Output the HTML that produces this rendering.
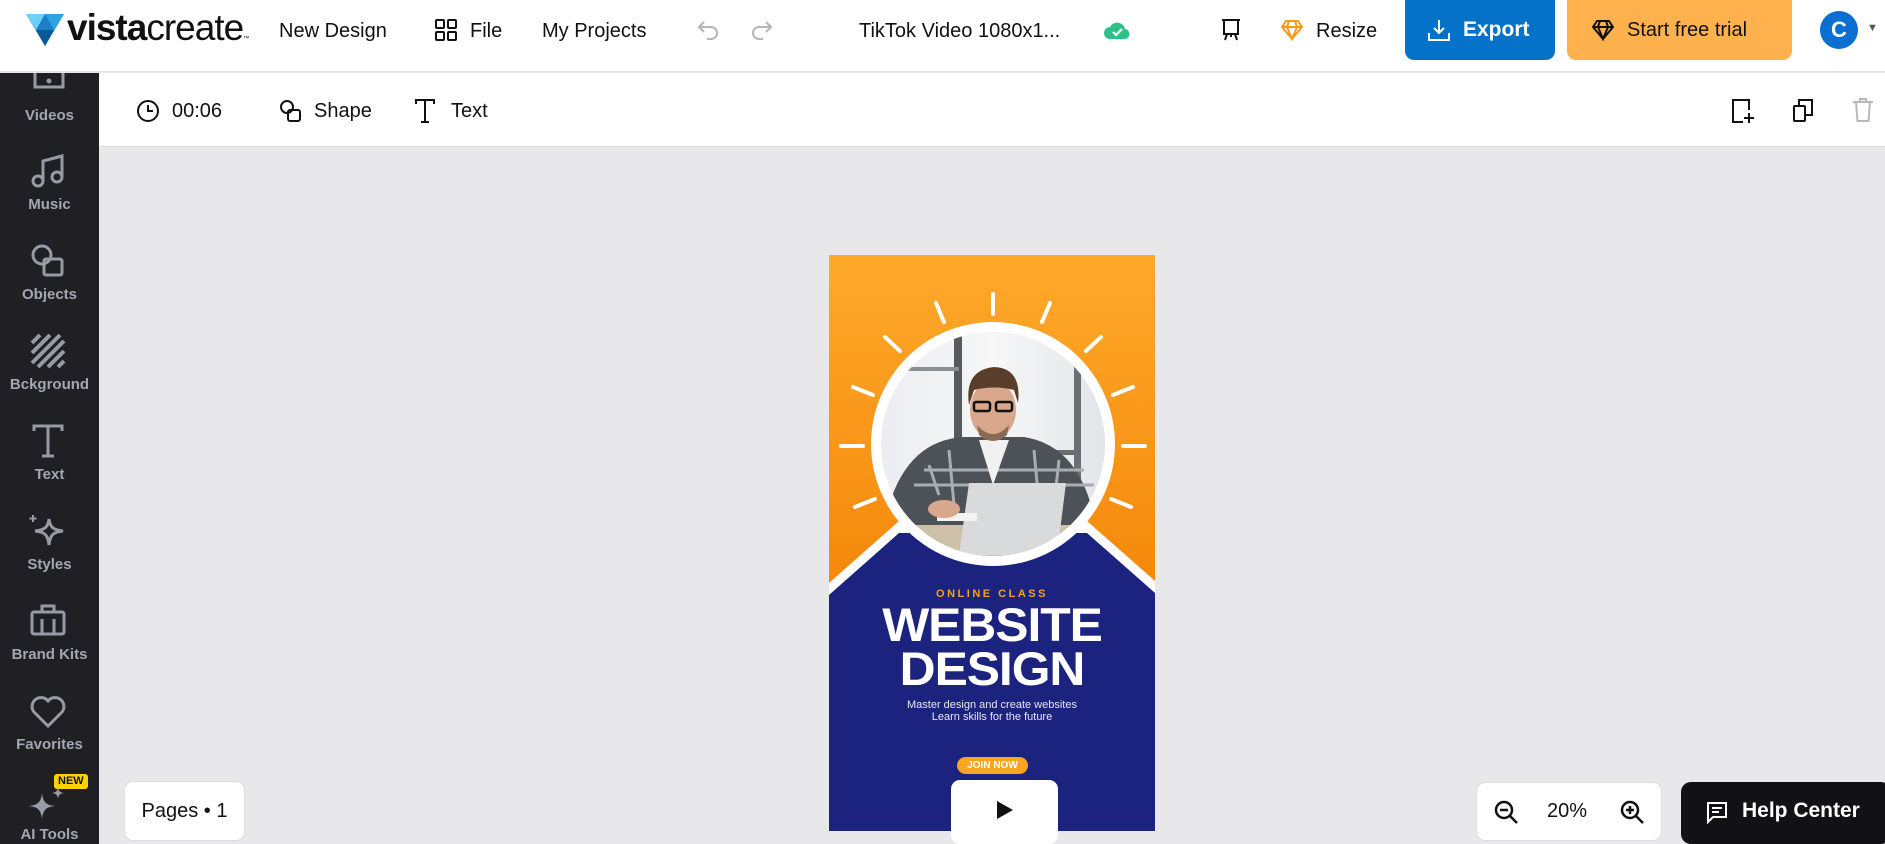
<!DOCTYPE html>
<html><head><meta charset="utf-8">
<style>
*{margin:0;padding:0;box-sizing:border-box}
body{width:1885px;height:844px;overflow:hidden;background:#e8e8ea;font-family:"Liberation Sans",Arial,sans-serif;position:relative;color:#111}
.hdr{position:absolute;left:0;top:0;width:1885px;height:72px;background:#fff;border-bottom:1px solid #e2e2e4}
.t{position:absolute;white-space:nowrap}
.side{position:absolute;left:0;top:73px;width:99px;height:771px;background:#1f1f24}
.side .lab{position:absolute;width:99px;text-align:center;color:#a6a6b0;font-size:15px;font-weight:bold}
.tb{position:absolute;left:99px;top:73px;width:1786px;height:74px;background:#fff;border-bottom:1px solid #dedee0}
.btn{position:absolute;border-radius:8px}
</style></head><body>
<div class="hdr">
  <svg style="position:absolute;left:26px;top:14px" width="38" height="32" viewBox="0 0 38 32">
    <polygon points="0,0 38,0 19,32" fill="#1b7fc8"/>
    <polygon points="0,0 19,0 10,16" fill="#6fd0f5"/>
    <polygon points="19,0 38,0 28,16" fill="#2da3e0"/>
    <polygon points="10,16 28,16 19,32" fill="#0a5a9a"/>
  </svg>
  <div class="t" style="left:67px;top:7px;font-size:37px;letter-spacing:-1px"><b>vista</b>create<span style="font-size:6px">™</span></div>
  <div class="t" style="left:279px;top:20px;font-size:20px">New Design</div>
  <svg style="position:absolute;left:435px;top:19px" width="22" height="22" viewBox="0 0 22 22" fill="none" stroke="#111" stroke-width="2"><rect x="1" y="1" width="8" height="8" rx="1"/><rect x="13" y="1" width="8" height="8" rx="1"/><rect x="1" y="13" width="8" height="8" rx="1"/><rect x="13" y="13" width="8" height="8" rx="1"/></svg>
  <div class="t" style="left:470px;top:20px;font-size:20px">File</div>
  <div class="t" style="left:542px;top:20px;font-size:20px">My Projects</div>
  <svg style="position:absolute;left:697px;top:20px" width="24" height="20" viewBox="0 0 24 20" fill="none" stroke="#b5b5ba" stroke-width="2"><path d="M7 2 2 7l5 5M2 7h12a6 6 0 0 1 0 12h-4"/></svg>
  <svg style="position:absolute;left:749px;top:20px" width="24" height="20" viewBox="0 0 24 20" fill="none" stroke="#b5b5ba" stroke-width="2"><path d="M17 2l5 5-5 5M22 7H10a6 6 0 0 0 0 12h4"/></svg>
  <div class="t" style="left:859px;top:20px;font-size:20px">TikTok Video 1080x1...</div>
  <svg style="position:absolute;left:1104px;top:19px" width="26" height="22" viewBox="0 0 26 22"><path d="M6 20a6 6 0 0 1 0-12 8 8 0 0 1 15 2 5 5 0 0 1-1 10z" fill="#2fc08a"/><path d="M9 13l3 3 6-6" fill="none" stroke="#fff" stroke-width="2.2"/></svg>
  <svg style="position:absolute;left:1219px;top:18px" width="24" height="24" viewBox="0 0 24 24" fill="none" stroke="#111" stroke-width="2"><path d="M3 2h18M5 2v14h14V2M8 16l-2 6M16 16l2 6M12 16v3"/></svg>
  <svg style="position:absolute;left:1281px;top:19px" width="22" height="22" viewBox="0 0 22 22" fill="none" stroke="#f59c1a" stroke-width="2"><path d="M5 2h12l4 6-10 12L1 8zM1 8h20M8 2 6 8l5 12 5-12-2-6"/></svg>
  <div class="t" style="left:1316px;top:20px;font-size:20px">Resize</div>
  <div class="btn" style="left:1405px;top:0;width:150px;height:60px;background:#0372c8;border-radius:0 0 9px 9px"></div>
  <svg style="position:absolute;left:1427px;top:18px" width="24" height="24" viewBox="0 0 24 24" fill="none" stroke="#fff" stroke-width="2"><path d="M12 2v13M7 10l5 5 5-5M2 15v7h20v-7"/></svg>
  <div class="t" style="left:1463px;top:18px;font-size:21px;color:#fff;font-weight:bold">Export</div>
  <div class="btn" style="left:1567px;top:0;width:225px;height:60px;background:#ffb14e;border-radius:0 0 9px 9px"></div>
  <svg style="position:absolute;left:1592px;top:19px" width="22" height="22" viewBox="0 0 22 22" fill="none" stroke="#111" stroke-width="2"><path d="M5 2h12l4 6-10 12L1 8zM1 8h20M8 2 6 8l5 12 5-12-2-6"/></svg>
  <div class="t" style="left:1627px;top:19px;font-size:20px">Start free trial</div>
  <div style="position:absolute;left:1820px;top:11px;width:38px;height:38px;border-radius:50%;background:#0a6fd0;color:#fff;font-weight:bold;font-size:22px;text-align:center;line-height:38px">C</div>
  <div class="t" style="left:1867px;top:22px;font-size:11px;color:#555">▼</div>
</div>

<div class="side">
  <svg style="position:absolute;left:33px;top:0" width="32" height="20" viewBox="0 0 32 20" fill="none" stroke="#9a9aa6" stroke-width="3"><path d="M2 0v14h28V0"/><circle cx="16" cy="8" r="1" fill="#9a9aa6"/></svg>
  <div class="lab" style="top:34px">Videos</div>
  <svg style="position:absolute;left:30px;top:80px" width="36" height="36" viewBox="0 0 36 36" fill="none" stroke="#9a9aa6" stroke-width="3"><circle cx="8" cy="28" r="5"/><circle cx="27" cy="24" r="5"/><path d="M13 28V8l19-5v21"/></svg>
  <div class="lab" style="top:123px">Music</div>
  <svg style="position:absolute;left:30px;top:170px" width="36" height="36" viewBox="0 0 36 36" fill="none" stroke="#9a9aa6" stroke-width="3"><circle cx="12" cy="12" r="9"/><rect x="14" y="16" width="18" height="16" rx="2"/></svg>
  <div class="lab" style="top:213px">Objects</div>
  <svg style="position:absolute;left:30px;top:260px" width="36" height="36" viewBox="0 0 36 36" stroke="#9a9aa6" stroke-width="4"><path d="M2 10 10 2M2 20 20 2M2 30 30 2M8 34 34 8M18 34 34 18M28 34 34 28"/></svg>
  <div class="lab" style="top:303px">Bckground</div>
  <svg style="position:absolute;left:30px;top:350px" width="36" height="36" viewBox="0 0 36 36" fill="none" stroke="#9a9aa6" stroke-width="3"><path d="M4 8V3h28v5M18 3v30M12 33h12"/></svg>
  <div class="lab" style="top:393px">Text</div>
  <svg style="position:absolute;left:27px;top:440px" width="40" height="36" viewBox="0 0 40 36" fill="none" stroke="#9a9aa6" stroke-width="3"><path d="M22 6c1 8 4 11 14 12-10 1-13 4-14 14-1-10-4-13-14-14 10-1 13-4 14-12z"/><path d="M6 2v7M2.5 5.5h7" stroke-width="2"/></svg>
  <div class="lab" style="top:483px">Styles</div>
  <svg style="position:absolute;left:30px;top:530px" width="36" height="34" viewBox="0 0 36 34" fill="none" stroke="#9a9aa6" stroke-width="3"><rect x="2" y="9" width="32" height="22" rx="2"/><path d="M12 9V3h12v6M12 16v15M24 16v15"/></svg>
  <div class="lab" style="top:573px">Brand Kits</div>
  <svg style="position:absolute;left:29px;top:622px" width="38" height="34" viewBox="0 0 38 34" fill="none" stroke="#9a9aa6" stroke-width="3"><path d="M19 31 5 17a8 8 0 0 1 14-11 8 8 0 0 1 14 11z"/></svg>
  <div class="lab" style="top:663px">Favorites</div>
  <div style="position:absolute;left:54px;top:701px;background:#ffd200;color:#111;font-size:11px;font-weight:bold;padding:0 4px;border-radius:3px;line-height:15px">NEW</div>
  <svg style="position:absolute;left:28px;top:712px" width="40" height="38" viewBox="0 0 40 38" fill="#9a9aa6"><path d="M14 8c1 9 4 12 13 13-9 1-12 4-13 13-1-9-4-12-13-13 9-1 12-4 13-13z"/><path d="M30 2c.5 4 2 5.5 6 6-4 .5-5.5 2-6 6-.5-4-2-5.5-6-6 4-.5 5.5-2 6-6z"/></svg>
  <div class="lab" style="top:753px">AI Tools</div>
</div>

<div class="tb">
  <svg style="position:absolute;left:37px;top:26px" width="24" height="24" viewBox="0 0 24 24" fill="none" stroke="#111" stroke-width="2"><circle cx="12" cy="12" r="10"/><path d="M12 6v6h5"/></svg>
  <div class="t" style="left:73px;top:27px;font-size:20px">00:06</div>
  <svg style="position:absolute;left:180px;top:26px" width="24" height="24" viewBox="0 0 24 24" fill="none" stroke="#111" stroke-width="2"><circle cx="8" cy="8" r="6"/><rect x="9" y="11" width="12" height="11" rx="2"/></svg>
  <div class="t" style="left:215px;top:27px;font-size:20px">Shape</div>
  <svg style="position:absolute;left:315px;top:25px" width="22" height="26" viewBox="0 0 22 26" fill="none" stroke="#111" stroke-width="2"><path d="M2 6V2h18v4M11 2v22M7 24h8"/></svg>
  <div class="t" style="left:352px;top:27px;font-size:20px">Text</div>
  <svg style="position:absolute;left:1631px;top:25px" width="26" height="26" viewBox="0 0 26 26" fill="none" stroke="#111" stroke-width="2"><path d="M14 2H3v22h10M3 2h16v10M19 15v10M14 20h10"/></svg>
  <svg style="position:absolute;left:1692px;top:25px" width="24" height="24" viewBox="0 0 24 24" fill="none" stroke="#111" stroke-width="2"><rect x="3" y="8" width="11" height="15" rx="1"/><path d="M8 8V2h13v15h-7"/></svg>
  <svg style="position:absolute;left:1753px;top:24px" width="22" height="26" viewBox="0 0 22 26" fill="none" stroke="#b8b8bd" stroke-width="2"><path d="M1 5h20M8 5V2h6v3M4 5l1.5 19h11L18 5"/></svg>
</div>

<!-- canvas -->
<div style="position:absolute;left:829px;top:255px;width:326px;height:576px;overflow:hidden">
<svg width="326" height="576" viewBox="0 0 326 576" style="position:absolute;left:0;top:0">
  <defs>
    <linearGradient id="og" x1="0" y1="0" x2="0" y2="1"><stop offset="0" stop-color="#fea92b"/><stop offset="0.55" stop-color="#f58a0c"/><stop offset="1" stop-color="#ef7400"/></linearGradient>
    <linearGradient id="bg2" x1="0" y1="0" x2="1" y2="0"><stop offset="0" stop-color="#e9ecef"/><stop offset="0.5" stop-color="#f7f7f7"/><stop offset="1" stop-color="#dfe3e6"/></linearGradient>
    <clipPath id="cc"><circle cx="164" cy="189" r="112"/></clipPath>
  </defs>
  <rect width="326" height="576" fill="url(#og)"/>
  <polygon points="0,328 70,266 258,266 326,326 326,576 0,576" fill="#fff"/>
  <polygon points="0,340 70,278 258,278 326,338 326,576 0,576" fill="#1b237e"/>
  <g stroke="#fff" stroke-width="4" stroke-linecap="round">
    <line x1="164" y1="59" x2="164" y2="39"/>
    <line x1="213" y1="67" x2="221" y2="48"/><line x1="115" y1="67" x2="107" y2="48"/>
    <line x1="257" y1="96" x2="272" y2="82"/><line x1="71" y1="96" x2="56" y2="82"/>
    <line x1="284" y1="140" x2="304" y2="132"/><line x1="44" y1="140" x2="24" y2="132"/>
    <line x1="294" y1="191" x2="316" y2="191"/><line x1="34" y1="191" x2="12" y2="191"/>
    <line x1="282" y1="244" x2="302" y2="252"/><line x1="46" y1="244" x2="26" y2="252"/>
  </g>
  <circle cx="164" cy="189" r="122" fill="#fff"/>
  <g clip-path="url(#cc)">
    <rect x="40" y="70" width="250" height="240" fill="url(#bg2)"/>
    <rect x="125" y="70" width="8" height="130" fill="#555a5e"/>
    <rect x="55" y="112" width="75" height="4" fill="#8a8f93"/>
    <rect x="245" y="70" width="7" height="170" fill="#6a6f73"/>
    <rect x="133" y="195" width="117" height="5" fill="#6a6f73"/>
    <rect x="50" y="255" width="240" height="60" fill="#cdbfa8"/>
    <path d="M60 250 Q80 185 135 182 L195 182 Q245 190 262 250 L262 270 L60 270z" fill="#4d5258"/>
    <path d="M100 210 L110 240 M120 195 L125 250 M205 195 L210 250 M230 205 L225 250 M85 230h180 M95 215h160" stroke="#a9adb1" stroke-width="3" fill="none"/>
    <path d="M150 185 L164 230 L180 185z" fill="#f1f1f1"/>
    <ellipse cx="164" cy="155" rx="23" ry="29" fill="#d9a78b"/>
    <path d="M140 150 Q135 115 165 112 Q193 113 189 148 L185 135 Q165 130 145 135z" fill="#5a3d2a"/>
    <rect x="145" y="147" width="16" height="9" rx="2" fill="none" stroke="#111" stroke-width="2.5"/>
    <rect x="167" y="147" width="16" height="9" rx="2" fill="none" stroke="#111" stroke-width="2.5"/>
    <path d="M148 170 Q164 188 180 170 L178 180 Q164 192 150 180z" fill="#8a6a55"/>
    <polygon points="140,228 237,228 228,300 130,300" fill="#d9dadc"/>
    <rect x="108" y="258" width="40" height="8" fill="#f3f3f3"/>
    <ellipse cx="115" cy="254" rx="16" ry="9" fill="#d9a78b"/>
  </g>
</svg>
<div style="position:absolute;left:0;top:333px;width:326px;text-align:center;color:#f7a21e;font-size:11px;font-weight:bold;letter-spacing:2.5px">ONLINE CLASS</div>
<div style="position:absolute;left:0;top:348px;width:326px;text-align:center;color:#fff;font-size:47px;font-weight:900;line-height:44px;letter-spacing:-1px;transform:scaleX(1.06)">WEBSITE<br>DESIGN</div>
<div style="position:absolute;left:0;top:444px;width:326px;text-align:center;color:#e8e8f2;font-size:11px;line-height:12px">Master design and create websites<br>Learn skills for the future</div>
<div style="position:absolute;left:128px;top:502px;width:71px;height:17px;border-radius:9px;background:#f8a51f;color:#fff;font-size:10px;font-weight:bold;text-align:center;line-height:17px">JOIN NOW</div>
</div>

<div style="position:absolute;left:124px;top:781px;width:121px;height:60px;background:#fff;border-radius:9px;border:1px solid #ddd;font-size:20px;text-align:center;line-height:58px">Pages • 1</div>
<div style="position:absolute;left:951px;top:780px;width:107px;height:64px;background:#fff;border-radius:9px"></div>
<svg style="position:absolute;left:996px;top:800px" width="18" height="20" viewBox="0 0 18 20"><polygon points="1,1 17,10 1,19" fill="#111"/></svg>
<div style="position:absolute;left:1476px;top:782px;width:186px;height:59px;background:#fff;border-radius:9px;border:1px solid #ddd"></div>
<svg style="position:absolute;left:1494px;top:800px" width="26" height="26" viewBox="0 0 26 26" fill="none" stroke="#111" stroke-width="2.5"><circle cx="10" cy="10" r="8"/><path d="M16 16l7 7M6 10h8"/></svg>
<div class="t" style="left:1547px;top:800px;font-size:20px">20%</div>
<svg style="position:absolute;left:1620px;top:800px" width="26" height="26" viewBox="0 0 26 26" fill="none" stroke="#111" stroke-width="2.5"><circle cx="10" cy="10" r="8"/><path d="M16 16l7 7M6 10h8M10 6v8"/></svg>
<div style="position:absolute;left:1681px;top:782px;width:210px;height:62px;background:#121216;border-radius:10px"></div>
<svg style="position:absolute;left:1705px;top:800px" width="24" height="24" viewBox="0 0 24 24" fill="none" stroke="#fff" stroke-width="2"><path d="M3 3h18v14H8l-5 5z M7 8h10M7 12h7"/></svg>
<div class="t" style="left:1742px;top:799px;font-size:21px;color:#fff;font-weight:bold">Help Center</div>
</body></html>
